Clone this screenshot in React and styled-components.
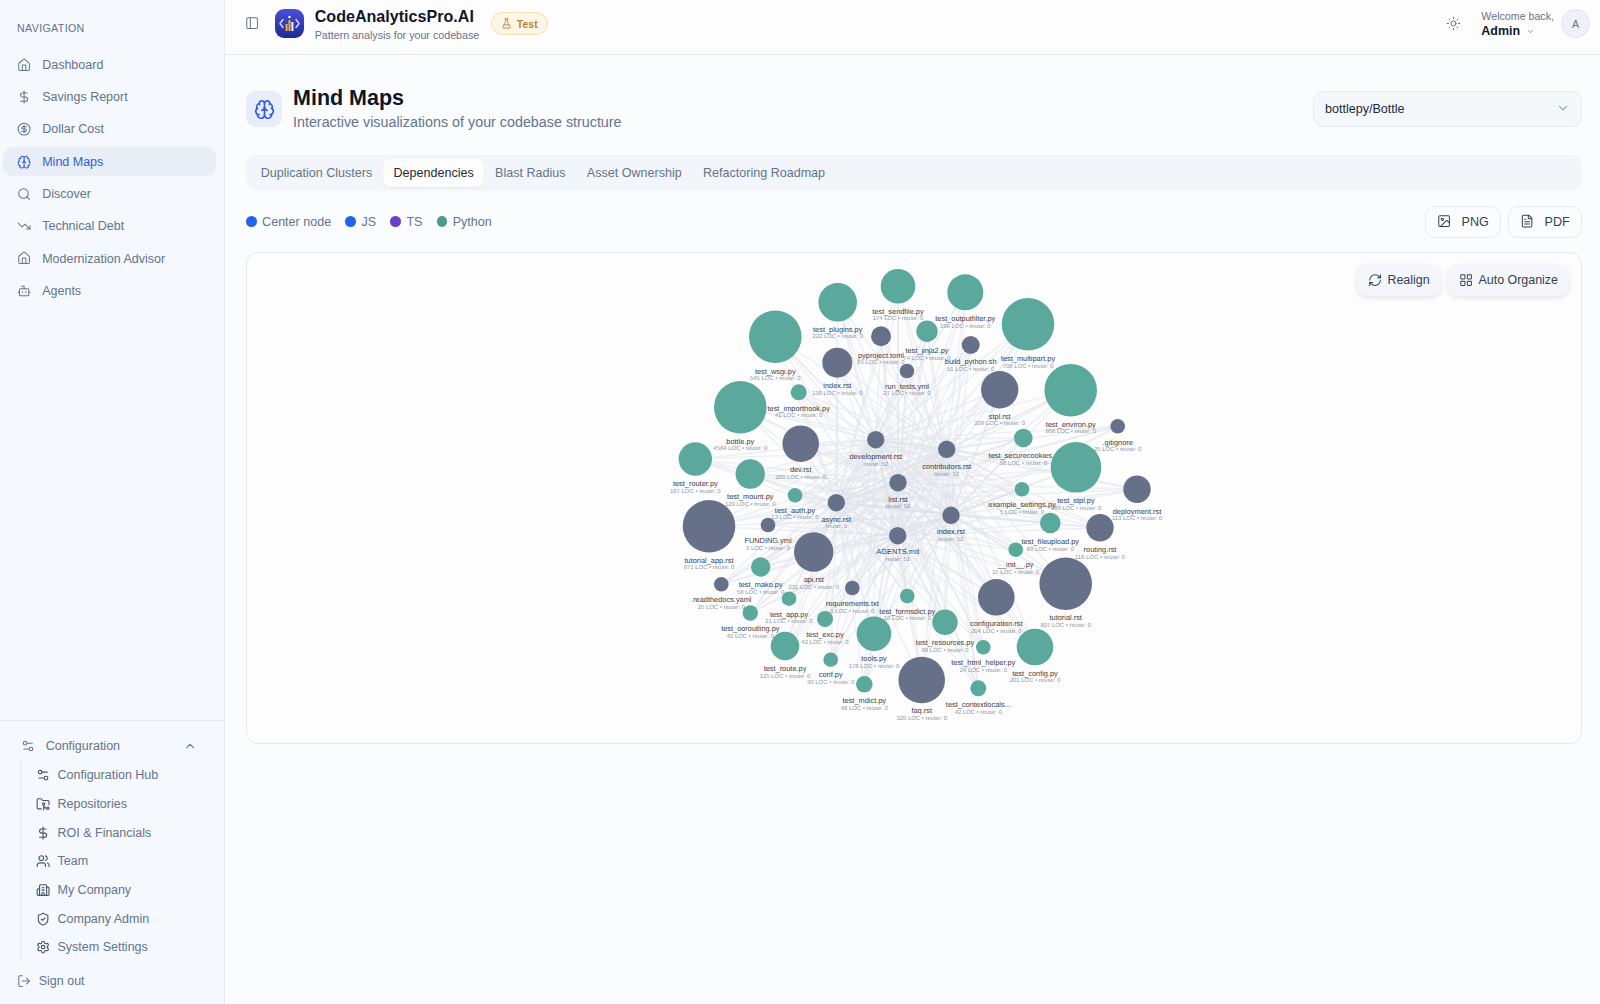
import React from 'react';
import styled, { createGlobalStyle } from 'styled-components';
import {
  House, DollarSign, CircleDollarSign, Brain, Search, TrendingDown, Bot, Settings2, ChevronUp, ChevronDown,
  FolderGit2, Users, Building2, ShieldCheck, Settings, LogOut, PanelLeft, FlaskConical, Sun, Image, FileText, RefreshCw, LayoutGrid,
} from 'lucide-react';

const Global = createGlobalStyle`
  html, body { margin: 0; padding: 0; height: 100%; }
  body { font-family: "Liberation Sans", Arial, sans-serif; background: #fbfcfe; color: #0f172a; }
  * { box-sizing: border-box; }
`;

const Shell = styled.div`display: flex; width: 1600px; height: 1004px; overflow: hidden; background: #fbfcfe;`;
const Sidebar = styled.aside`width: 225px; flex: none; height: 100%; display: flex; flex-direction: column; background: #f5f8fc; border-right: 1px solid #e7ecf3;`;
const NavArea = styled.nav`flex: 1; padding: 21px 8px 0 3px;`;
const NavHeading = styled.div`font-size: 10.67px; line-height: 15px; letter-spacing: 0.35px; color: #64748b; padding-left: 14px; margin-bottom: 14.3px;`;
const NavItem = styled.div`
  height: 29px; margin-bottom: 3.3px; display: flex; align-items: center; gap: 11px; padding-left: 14px; border-radius: 10px;
  font-size: 12.5px; color: ${p => (p.$active ? '#2f5fe0' : '#64748b')}; background: ${p => (p.$active ? '#e8edf6' : 'transparent')};
  svg { width: 14.2px; height: 14.2px; flex: none; stroke-width: 1.7; }
`;
const ConfigArea = styled.div`border-top: 1px solid #e3e8f1; padding: 11px 0 9px 0;`;
const ConfigHead = styled.div`
  height: 28px; display: flex; align-items: center; padding: 0 27px 0 21px; gap: 10.5px; font-size: 12.5px; color: #64748b;
  svg { width: 14.2px; height: 14.2px; stroke-width: 1.7; flex: none; }
  span { flex: 1; }
`;
const SubList = styled.div`margin: 0 0 0 20px; border-left: 1px solid #e3e8f1; padding: 1px 0 0 0; height: 200px;`;
const SubItem = styled.div`
  height: 28.7px; display: flex; align-items: center; gap: 7.3px; padding-left: 15px; font-size: 12.5px; color: #64748b;
  svg { width: 14.2px; height: 14.2px; stroke-width: 1.9; flex: none; color: #475569; }
`;
const SignOut = styled.div`
  height: 28px; margin-top: 7px; display: flex; align-items: center; gap: 7.5px; padding-left: 17px; font-size: 12.5px; color: #64748b;
  svg { width: 14.2px; height: 14.2px; stroke-width: 1.7; flex: none; }
`;
const MainCol = styled.div`flex: 1; min-width: 0; display: flex; flex-direction: column;`;
const Header = styled.header`height: 55px; flex: none; display: flex; align-items: center; padding: 0 10px 7px 20px; border-bottom: 1px solid #e3e8f0; background: #fdfdfe;`;
const HeaderIcon = styled.span`display: flex; color: #64748b; svg { width: 14.2px; height: 14.2px; stroke-width: 1.7; }`;
const LogoSvg = styled.svg`width: 29px; height: 29px; margin-left: 16px; flex: none;`;
const Brand = styled.div`margin-left: 10.5px; padding-top: 1px; display: flex; flex-direction: column;`;
const BrandTitle = styled.div`font-size: 16.1px; line-height: 20px; font-weight: 700; color: #0f172a; white-space: nowrap;`;
const BrandSub = styled.div`font-size: 10.7px; line-height: 14px; margin-top: 2px; color: #64748b; white-space: nowrap;`;
const TestBadge = styled.div`
  margin-left: 11.5px; height: 23px; width: 57px; display: flex; align-items: center; justify-content: center; gap: 5px; border-radius: 12px;
  background: #fdf6e7; border: 1px solid #f3dfb7; color: #b7862f; font-size: 10.5px; font-weight: 700;
  svg { width: 11px; height: 11px; }
`;
const Spacer = styled.div`flex: 1;`;
const SunWrap = styled.span`display: flex; color: #64748b; margin-right: 20px; svg { width: 15px; height: 15px; stroke-width: 1.6; }`;
const UserBlock = styled.div`display: flex; flex-direction: column; margin-right: 7px;`;
const Welcome = styled.div`font-size: 10.67px; line-height: 15px; color: #64748b; white-space: nowrap;`;
const AdminRow = styled.div`display: flex; align-items: center; gap: 6px; font-size: 12.44px; line-height: 15px; font-weight: 700; color: #0f172a; svg { width: 9px; height: 9px; color: #64748b; }`;
const Avatar = styled.div`width: 29px; height: 29px; border-radius: 50%; border: 1px solid #dfe5ef; background: #eef2f8; color: #64748b; font-size: 10.67px; display: flex; align-items: center; justify-content: center;`;
const Page = styled.main`padding: 36px 18.3px 0 21px;`;
const TitleRow = styled.div`display: flex; align-items: center; height: 36px;`;
const TitleIcon = styled.div`width: 36px; height: 36px; border-radius: 10px; background: #e7edfb; color: #2f5fe0; display: flex; align-items: center; justify-content: center; svg { width: 21px; height: 21px; stroke-width: 1.9; }`;
const TitleText = styled.div`margin-left: 11px; flex: 1;`;
const PageTitle = styled.h1`margin: 0; font-size: 21.5px; line-height: 26px; font-weight: 700; color: #0f172a;`;
const PageSub = styled.p`margin: 0; font-size: 14.32px; line-height: 22px; color: #64748b;`;
const Select = styled.div`width: 268.7px; height: 36px; margin-top: -1px; border-radius: 10px; border: 1px solid #e6ebf3; background: #f5f8fb; display: flex; align-items: center; justify-content: space-between; padding: 0 11px 0 11px; font-size: 12.55px; color: #1e293b; svg { width: 14.2px; height: 14.2px; color: #8f9bb0; }`;
const Tabs = styled.div`margin-top: 28px; height: 36px; border-radius: 10px; background: #f2f5f9; display: flex; align-items: center; padding: 0 4px;`;
const Tab = styled.div`height: 28px; padding: 0 10.67px; border-radius: 8px; display: flex; align-items: center; font-size: 12.55px; white-space: nowrap; color: ${p => (p.$active ? '#1e293b' : '#64748b')}; background: ${p => (p.$active ? '#fdfdfe' : 'transparent')}; box-shadow: ${p => (p.$active ? '0 1px 2px rgba(15,23,42,.05)' : 'none')};`;
const ToolRow = styled.div`margin-top: 14px; height: 33px; display: flex; align-items: center;`;
const Legend = styled.div`flex: 1; display: flex; align-items: center; gap: 14.2px;`;
const LegendItem = styled.div`display: flex; align-items: center; gap: 5.5px; font-size: 12.55px; color: #64748b;`;
const Dot = styled.span`width: 10.6px; height: 10.6px; border-radius: 50%; background: ${p => p.$c};`;
const ExportButton = styled.div`height: 32px; margin-left: 7.6px; padding: 0 11px 0 11px; border: 1px solid #e6ebf3; border-radius: 10px; background: #fbfcfe; display: flex; align-items: center; gap: 10px; font-size: 12.55px; color: #334155; svg { width: 14.2px; height: 14.2px; stroke-width: 1.7; }`;
const Canvas = styled.section`position: relative; margin-top: 14px; height: 492px; border: 1px solid #e5eaf2; border-radius: 12px; background: #fdfdfe; overflow: hidden;`;
const CanvasTools = styled.div`position: absolute; top: 11px; right: 11.7px; display: flex; gap: 7.7px;`;
const CanvasButton = styled.div`height: 32px; padding: 0 11px 0 11px; border-radius: 10px; background: #f3f6fa; box-shadow: 0 2px 5px rgba(15,23,42,.10); display: flex; align-items: center; gap: 5px; font-size: 12.44px; color: #334155; white-space: nowrap; svg { width: 14.2px; height: 14.2px; stroke-width: 1.7; }`;
const Graph = styled.svg`position: absolute; left: -1px; top: -1px; width: 1335px; height: 492px;`;
const NodeLabel = styled.text`font-family: "Liberation Sans", Arial, sans-serif; font-size: 7.4px; fill: #3a3f4a; text-anchor: middle; text-rendering: geometricPrecision;`;
const NodeMeta = styled.text`font-family: "Liberation Sans", Arial, sans-serif; font-size: 5.95px; fill: #8b93a3; text-anchor: middle; text-rendering: geometricPrecision;`;

const T = '#5aa99c', G = '#667189';
// name, meta, cx, cy, r, colour, label baseline centre, meta centre (page coordinates)
const nodes = [
  ['test_wsgi.py','545 LOC • reuse: 0',775.3,336.7,26.3,T,371,379],
  ['test_plugins.py','222 LOC • reuse: 0',837.7,302.3,19.3,T,329,337],
  ['test_sendfile.py','174 LOC • reuse: 0',898,286.3,17.3,T,311,319],
  ['pyproject.toml','65 LOC • reuse: 0',881,336.3,10,G,355,363],
  ['index.rst','138 LOC • reuse: 0',837.3,362.7,15,G,385.3,393.7],
  ['run_tests.yml','27 LOC • reuse: 0',907,371,7.3,G,386,394],
  ['test_importhook.py','41 LOC • reuse: 0',798.7,392.3,8,T,408,416],
  ['bottle.py','4584 LOC • reuse: 0',740.3,407.3,26.3,T,441,449.3],
  ['dev.rst','200 LOC • reuse: 0',800.7,443.7,18.3,G,469.3,477.7],
  ['test_router.py','167 LOC • reuse: 0',695.3,459,16.7,T,483,491.7],
  ['test_mount.py','129 LOC • reuse: 0',750.3,474,14.7,T,496.3,504.7],
  ['test_auth.py','13 LOC • reuse: 0',795,495.3,7.3,T,510,518.3],
  ['tutorial_app.rst','871 LOC • reuse: 0',709,526.3,26.3,G,560,568.3],
  ['FUNDING.yml','3 LOC • reuse: 0',768,525,7.3,G,540.3,548.7],
  ['api.rst','231 LOC • reuse: 0',813.7,552,19.7,G,579.7,588],
  ['test_mako.py','58 LOC • reuse: 0',760.7,567,9.7,T,584.3,592.7],
  ['.readthedocs.yaml','25 LOC • reuse: 0',721.3,584.3,7.3,G,599.3,607.7],
  ['test_app.py','21 LOC • reuse: 0',789,598.7,7.3,T,614,622],
  ['requirements.txt','1 LOC • reuse: 0',852.3,588,7.3,G,603.3,611.7],
  ['test_formsdict.py','18 LOC • reuse: 0',907.3,596,7.3,T,611.3,619.3],
  ['test_ooroutling.py','40 LOC • reuse: 0',750.3,613,7.7,T,628.3,636.7],
  ['test_exc.py','42 LOC • reuse: 0',825,619,8,T,634.7,642.7],
  ['tools.py','178 LOC • reuse: 0',874,633.7,17.3,T,658.7,667],
  ['test_route.py','125 LOC • reuse: 0',785,646,14.3,T,668.7,676.7],
  ['conf.py','30 LOC • reuse: 0',830.7,659.7,7.3,T,674.7,683],
  ['test_mdict.py','48 LOC • reuse: 0',864.3,684.3,8.3,T,700.7,709],
  ['faq.rst','320 LOC • reuse: 0',921.7,680,23.3,G,710.3,718.7],
  ['test_outputfilter.py','198 LOC • reuse: 0',965.3,292.3,18,T,318.3,326.7],
  ['test_jinja2.py','74 LOC • reuse: 0',927,331.3,10.7,T,350.7,359],
  ['build_python.sh','51 LOC • reuse: 0',970.7,345,9,G,361,370.3],
  ['test_multipart.py','708 LOC • reuse: 0',1028,324.3,26.3,T,358.7,367],
  ['stpl.rst','209 LOC • reuse: 0',999.7,389.7,18.7,G,416,424.3],
  ['test_environ.py','908 LOC • reuse: 0',1070.7,390.3,26.3,T,424,432.3],
  ['.gitignore','25 LOC • reuse: 0',1117.7,426.3,7.3,G,442,450.3],
  ['test_securecookies...','56 LOC • reuse: 0',1023.3,438,9.3,T,455.3,463.7],
  ['test_stpl.py','469 LOC • reuse: 0',1076,467.3,25.3,T,500.3,508.7],
  ['example_settings.py','5 LOC • reuse: 0',1022,489.3,7.3,T,504.7,513],
  ['deployment.rst','113 LOC • reuse: 0',1137,489.3,13.7,G,511,519.3],
  ['test_fileupload.py','69 LOC • reuse: 0',1050.3,523,10.3,T,541.3,549.7],
  ['routing.rst','116 LOC • reuse: 0',1100,527.7,13.7,G,549.3,557.7],
  ['__init__.py','15 LOC • reuse: 0',1015.7,549.7,7.3,T,564.7,573],
  ['tutorial.rst','807 LOC • reuse: 0',1065.7,583.7,26.3,G,617.3,625.7],
  ['configuration.rst','204 LOC • reuse: 0',996.3,597.3,18.3,G,623.7,632],
  ['test_resources.py','98 LOC • reuse: 0',945,622.3,12.7,T,642.7,650.7],
  ['test_html_helper.py','24 LOC • reuse: 0',983.3,647.3,7.3,T,662.3,671.3],
  ['test_config.py','201 LOC • reuse: 0',1035,647,18.3,T,673,681],
  ['test_contextlocals...','42 LOC • reuse: 0',978.3,688.3,8,T,704.3,712.7],
];
const hubs = [
  ['development.rst','reuse: 52',875.7,439.7,8.7,G,456.3,464.7],
  ['contributors.rst','reuse: 52',946.7,449.3,8.7,G,466,474.7],
  ['list.rst','reuse: 52',898,482.7,8.7,G,499,507.3],
  ['index.rst','reuse: 52',951,515.3,8.7,G,531.3,539.7],
  ['AGENTS.md','reuse: 52',897.7,535.7,8.7,G,551.7,560.3],
  ['async.rst','reuse: 5',836.3,502.7,8.7,G,519,527.3],
];
const all = [...nodes, ...hubs];
const OX = 246, OY = 252;

function GraphView() {
  return (
    <Graph viewBox={`${OX} ${OY} 1335 492`}>
      <g stroke="#dfe4ec" strokeWidth="1.5" strokeOpacity="0.5">
        {hubs.flatMap((h, i) => all.filter(n => n !== h).map((n, j) => (
          <line key={`${i}-${j}`} x1={h[2]} y1={h[3]} x2={n[2]} y2={n[3]} />
        )))}
      </g>
      {all.map((n, i) => (
        <g key={i}>
          <circle cx={n[2]} cy={n[3]} r={n[4]} fill={n[5]} />
          <NodeLabel x={n[2]} y={n[6]} dominantBaseline="central">{n[0]}</NodeLabel>
          <NodeMeta x={n[2]} y={n[7]} dominantBaseline="central">{n[1]}</NodeMeta>
        </g>
      ))}
    </Graph>
  );
}

const Logo = () => (
  <LogoSvg viewBox="0 0 29 29">
    <defs>
      <linearGradient id="lg" x1="0" y1="0" x2="0" y2="1"><stop offset="0" stopColor="#4a4fd8" /><stop offset="1" stopColor="#1f2a94" /></linearGradient>
    </defs>
    <rect width="29" height="29" rx="9" fill="url(#lg)" />
    <path d="M8 10.5l-3 4 3 4M21 10.5l3 4-3 4" fill="none" stroke="#cfd9ff" strokeWidth="1.5" strokeLinecap="round" strokeLinejoin="round" />
    <rect x="10.6" y="15" width="2" height="7" fill="#eeb03c" />
    <rect x="13.5" y="11" width="2" height="11" fill="#eeb03c" />
    <rect x="16.4" y="13" width="2" height="9" fill="#f0f3ff" />
    <circle cx="14.5" cy="8" r="1.3" fill="#f2f4ff" />
  </LogoSvg>
);

const navItems = [
  [House, 'Dashboard'], [DollarSign, 'Savings Report'], [CircleDollarSign, 'Dollar Cost'], [Brain, 'Mind Maps', true],
  [Search, 'Discover'], [TrendingDown, 'Technical Debt'], [House, 'Modernization Advisor'], [Bot, 'Agents'],
];
const subItems = [
  [Settings2, 'Configuration Hub'], [FolderGit2, 'Repositories'], [DollarSign, 'ROI & Financials'], [Users, 'Team'],
  [Building2, 'My Company'], [ShieldCheck, 'Company Admin'], [Settings, 'System Settings'],
];

export default function App() {
  return (
    <Shell>
      <Global />
      <Sidebar>
        <NavArea>
          <NavHeading>NAVIGATION</NavHeading>
          {navItems.map(([Icon, label, active]) => (
            <NavItem key={label} $active={active}><Icon />{label}</NavItem>
          ))}
        </NavArea>
        <ConfigArea>
          <ConfigHead><Settings2 /><span>Configuration</span><ChevronUp /></ConfigHead>
          <SubList>
            {subItems.map(([Icon, label]) => <SubItem key={label}><Icon />{label}</SubItem>)}
          </SubList>
          <SignOut><LogOut />Sign out</SignOut>
        </ConfigArea>
      </Sidebar>
      <MainCol>
        <Header>
          <HeaderIcon><PanelLeft /></HeaderIcon>
          <Logo />
          <Brand>
            <BrandTitle>CodeAnalyticsPro.AI</BrandTitle>
            <BrandSub>Pattern analysis for your codebase</BrandSub>
          </Brand>
          <TestBadge><FlaskConical />Test</TestBadge>
          <Spacer />
          <SunWrap><Sun /></SunWrap>
          <UserBlock>
            <Welcome>Welcome back,</Welcome>
            <AdminRow>Admin <ChevronDown /></AdminRow>
          </UserBlock>
          <Avatar>A</Avatar>
        </Header>
        <Page>
          <TitleRow>
            <TitleIcon><Brain /></TitleIcon>
            <TitleText>
              <PageTitle>Mind Maps</PageTitle>
              <PageSub>Interactive visualizations of your codebase structure</PageSub>
            </TitleText>
            <Select>bottlepy/Bottle<ChevronDown /></Select>
          </TitleRow>
          <Tabs>
            <Tab>Duplication Clusters</Tab>
            <Tab $active>Dependencies</Tab>
            <Tab>Blast Radius</Tab>
            <Tab>Asset Ownership</Tab>
            <Tab>Refactoring Roadmap</Tab>
          </Tabs>
          <ToolRow>
            <Legend>
              <LegendItem><Dot $c="#2563eb" />Center node</LegendItem>
              <LegendItem><Dot $c="#2563eb" />JS</LegendItem>
              <LegendItem><Dot $c="#6d3fc4" />TS</LegendItem>
              <LegendItem><Dot $c="#4a9d8e" />Python</LegendItem>
            </Legend>
            <ExportButton><Image />PNG</ExportButton>
            <ExportButton><FileText />PDF</ExportButton>
          </ToolRow>
          <Canvas>
            <GraphView />
            <CanvasTools>
              <CanvasButton><RefreshCw />Realign</CanvasButton>
              <CanvasButton><LayoutGrid />Auto Organize</CanvasButton>
            </CanvasTools>
          </Canvas>
        </Page>
      </MainCol>
    </Shell>
  );
}
